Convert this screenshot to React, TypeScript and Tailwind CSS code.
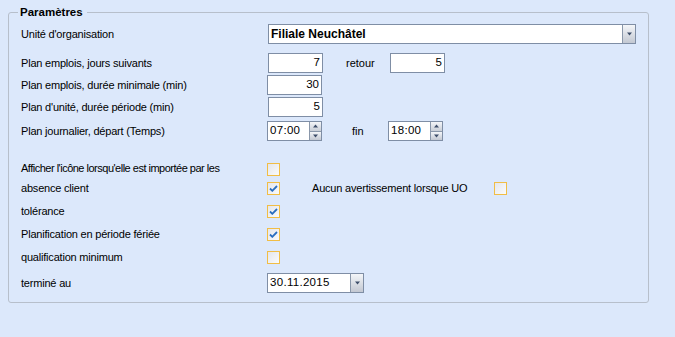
import React from 'react';

const FONT = "font-['Liberation_Sans',Arial,sans-serif]";

function DropButton() {
  return (
    <div className="w-[13px] h-full border-l border-[#8a97aa] bg-gradient-to-b from-[#f4f6f9] to-[#c3c8d2] flex items-center justify-center">
      <svg width="7" height="4" viewBox="0 0 7 4">
        <path d="M1 0.5h5L3.5 3.5z" fill="#3d4d69" />
      </svg>
    </div>
  );
}

function NumBox({ value }: { value: string }) {
  return (
    <div className="w-[55px] h-[20px] bg-white border border-[#7f8ea5] flex items-center justify-end pr-[2px] text-[11.5px]">
      {value}
    </div>
  );
}

function TimeBox({ value }: { value: string }) {
  return (
    <div className="w-[55px] h-[20px] bg-white border border-[#7f8ea5] flex">
      <div className="flex-1 flex items-center pl-[2px] text-[11.5px] tracking-[0.3px]">{value}</div>
      <div className="w-[12px] flex flex-col border-l border-[#8a97aa]">
        <div className="flex-1 bg-gradient-to-b from-[#f4f6f9] to-[#c9ced7] flex items-center justify-center border-b border-[#8a97aa]">
          <svg width="7" height="4" viewBox="0 0 7 4">
            <path d="M1 3.5h5L3.5 0.5z" fill="#3d4d69" />
          </svg>
        </div>
        <div className="flex-1 bg-gradient-to-b from-[#f4f6f9] to-[#c3c8d2] flex items-center justify-center">
          <svg width="7" height="4" viewBox="0 0 7 4">
            <path d="M1 0.5h5L3.5 3.5z" fill="#3d4d69" />
          </svg>
        </div>
      </div>
    </div>
  );
}

function Check({ checked }: { checked?: boolean }) {
  return (
    <div className="w-[13px] h-[13px] shrink-0 border border-[#f1bd45] bg-gradient-to-br from-[#e4e6ec] to-[#fafbfc] flex items-center justify-center">
      {checked && (
        <svg width="9" height="7" viewBox="0 0 9 7">
          <path d="M1 3.5l2.3 2.3L8 1" stroke="#2a6ec0" strokeWidth="1.8" fill="none" />
        </svg>
      )}
    </div>
  );
}

function Row({
  label,
  className,
  labelClass = 'tracking-[-0.2px]',
  children,
}: {
  label: string;
  className: string;
  labelClass?: string;
  children?: React.ReactNode;
}) {
  return (
    <div className={`flex items-center ${className}`}>
      <div className={`w-[247px] shrink-0 text-[11px] text-black whitespace-nowrap ${labelClass}`}>{label}</div>
      {children}
    </div>
  );
}

export default function App() {
  return (
    <div className={`${FONT} w-[675px] h-[337px] bg-[#dce8fb] pt-[12px] px-[8px] text-black`}>
      <div className="relative w-[641px] h-[291px] border border-[#b7bfcb] rounded-[3px] pl-[12px] pt-[11px]">
        <div className="absolute -top-[9px] left-[9px] px-[2px] pr-[4px] bg-[#dce8fb] text-[11.5px] font-bold leading-[16px]">
          Paramètres
        </div>

        <Row label="Unité d'organisation" className="h-[20px]">
          <div className="w-[368px] h-[20px] bg-white border border-[#7f8ea5] flex">
            <div className="flex-1 flex items-center pl-[2px] text-[12px] font-bold">Filiale Neuchâtel</div>
            <DropButton />
          </div>
        </Row>

        <Row label="Plan emplois, jours suivants" className="h-[20px] mt-[9px]">
          <NumBox value="7" />
          <div className="ml-[23px] w-[44px] text-[11px]">retour</div>
          <NumBox value="5" />
        </Row>

        <Row label="Plan emplois, durée minimale (min)" className="h-[20px] mt-[2px]">
          <div className="-ml-[1px]">
            <NumBox value="30" />
          </div>
        </Row>

        <Row label="Plan d'unité, durée période (min)" className="h-[20px] mt-[2px]">
          <NumBox value="5" />
        </Row>

        <Row label="Plan journalier, départ (Temps)" className="h-[20px] mt-[4px]">
          <div className="-ml-[1px]">
            <TimeBox value="07:00" />
          </div>
          <div className="ml-[30px] w-[36px] text-[11px]">fin</div>
          <TimeBox value="18:00" />
        </Row>

        <Row
          label="Afficher l'icône lorsqu'elle est importée par les"
          labelClass="tracking-[-0.5px]"
          className="h-[19px] mt-[19px] items-start"
        >
          <div className="-ml-[1px] pt-[3px]">
            <Check />
          </div>
        </Row>

        <Row label="absence client" className="h-[19px]">
          <div className="-ml-[1px]">
            <Check checked />
          </div>
          <div className="ml-[32px] w-[182px] text-[11px] tracking-[-0.2px]">Aucun avertissement lorsque UO</div>
          <Check />
        </Row>

        <Row label="tolérance" className="h-[19px] mt-[4px]">
          <div className="-ml-[1px]">
            <Check checked />
          </div>
        </Row>

        <Row label="Planification en période fériée" className="h-[19px] mt-[4px]">
          <div className="-ml-[1px]">
            <Check checked />
          </div>
        </Row>

        <Row label="qualification minimum" className="h-[19px] mt-[4px]">
          <div className="-ml-[1px]">
            <Check />
          </div>
        </Row>

        <Row label="terminé au" className="h-[20px] mt-[6px]">
          <div className="-ml-[1px] w-[97px] h-[20px] bg-white border border-[#7f8ea5] flex">
            <div className="flex-1 flex items-center pl-[2px] text-[11.5px] tracking-[0.3px]">30.11.2015</div>
            <DropButton />
          </div>
        </Row>
      </div>
    </div>
  );
}
